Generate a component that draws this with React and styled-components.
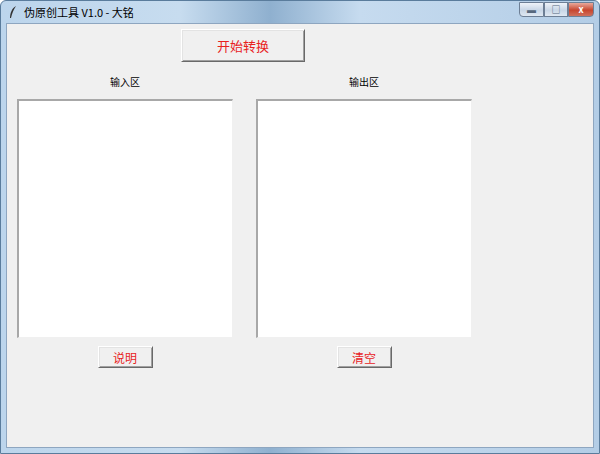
import React from "react";
import styled, { createGlobalStyle } from "styled-components";

const G = createGlobalStyle`
  body{margin:0;font-family:"Noto Sans CJK SC","Liberation Sans",sans-serif;}
`;
const Win = styled.div`
  width:600px;height:454px;box-sizing:border-box;display:flex;flex-direction:column;
  background:linear-gradient(90deg,#bcd5ec 0%,#c7dcef 30%,#8fb0cf 45%,#c6dbef 60%,#b3cde6 100%);
  border:1px solid #5a7c9c;border-radius:6px 6px 0 0;padding:0 5px 5px 5px;
`;
const TitleBar = styled.div`
  height:22px;display:flex;align-items:center;position:relative;font-size:11px;color:#000;gap:6px;padding-left:2px;
`;
const Controls = styled.div`
  position:absolute;right:0;top:1px;display:flex;
`;
const Ctl = styled.div`
  width:${p=>p.w}px;height:15px;box-sizing:border-box;border:1px solid #6d7f95;
  background:${p=>p.red?"linear-gradient(#e9a99c,#c7462f 55%,#d0705c)":"linear-gradient(#eef3f9,#c8d6e6 55%,#dfe8f2)"};
  color:${p=>p.red?"#fff":"#56687d"};font-size:9px;font-weight:bold;display:flex;align-items:center;justify-content:center;
  border-radius:${p=>p.r||"0"};
`;
const Client = styled.div`
  flex:1;background:#f0f0f0;border:1px solid #8ea6c0;display:flex;flex-direction:column;padding:5px 0 0 10px;
`;
const Top = styled.div`padding-left:164px;`;
const Btn = styled.div`
  box-sizing:border-box;width:${p=>p.w}px;height:${p=>p.h}px;background:#f0f0f0;
  border:1px solid #fff;border-right-color:#696969;border-bottom-color:#696969;
  box-shadow:1px 1px 0 #e3e3e3 inset,-1px -1px 0 #a0a0a0 inset;
  color:#e8221e;font-size:${p=>p.f}px;display:flex;align-items:center;justify-content:center;
`;
const Cols = styled.div`display:flex;gap:23px;margin-top:12px;`;
const Col = styled.div`display:flex;flex-direction:column;align-items:center;width:216px;`;
const Label = styled.div`font-size:10px;height:14px;margin-bottom:11px;`;
const Area = styled.div`
  width:216px;height:239px;box-sizing:border-box;background:#fff;
  border-style:solid;border-color:#a8a8a8 #f0f0f0 #f0f0f0 #a8a8a8;
  border-width:2px 1px 1px 2px;margin-bottom:8px;
`;

export default function App(){
  return <Win><G/>
    <TitleBar>
      <svg width="10" height="14" viewBox="0 0 10 14"><path d="M8 1 C4 3 2 8 2 13 L3 13 C4 8 6 4 8 1Z" fill="#333"/></svg>
      伪原创工具 V1.0 - 大铭
      <Controls>
        <Ctl w={25} r="0 0 0 4px">▬</Ctl><Ctl w={24}>□</Ctl><Ctl w={26} red r="0 0 4px 0">x</Ctl>
      </Controls>
    </TitleBar>
    <Client>
      <Top><Btn w={124} h={33} f={13}>开始转换</Btn></Top>
      <Cols>
        <Col><Label>输入区</Label><Area/><Btn w={55} h={22} f={12}>说明</Btn></Col>
        <Col><Label>输出区</Label><Area/><Btn w={55} h={22} f={12}>清空</Btn></Col>
      </Cols>
    </Client>
  </Win>;
}
